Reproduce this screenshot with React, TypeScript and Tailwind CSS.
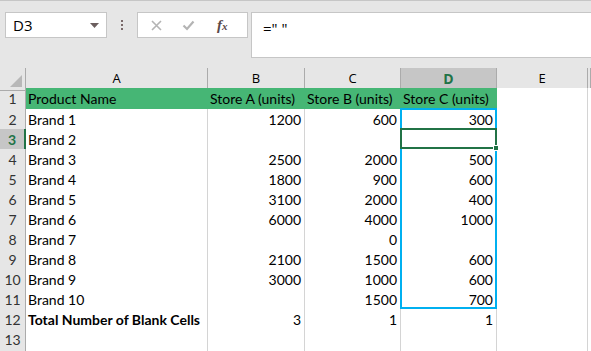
import React from "react";

type Cell = string | number;

const rows: { cells: Cell[]; bold?: boolean }[] = [
  { cells: ["Brand 1", 1200, 600, 300] },
  { cells: ["Brand 2", "", "", ""] },
  { cells: ["Brand 3", 2500, 2000, 500] },
  { cells: ["Brand 4", 1800, 900, 600] },
  { cells: ["Brand 5", 3100, 2000, 400] },
  { cells: ["Brand 6", 6000, 4000, 1000] },
  { cells: ["Brand 7", "", 0, ""] },
  { cells: ["Brand 8", 2100, 1500, 600] },
  { cells: ["Brand 9", 3000, 1000, 600] },
  { cells: ["Brand 10", "", 1500, 700] },
  { cells: ["Total Number of Blank Cells", 3, 1, 1], bold: true },
  { cells: ["", "", "", ""] },
  { cells: ["", "", "", ""] },
];

const gridCols = "grid grid-cols-[26px_182px_97px_96px_96px_91px_1fr]";
const cellFont = { fontFamily: "Lato, 'Open Sans', sans-serif" };

export default function App() {
  return (
    <div className="w-[591px] h-[351px] overflow-hidden bg-[#e6e6e6] relative" style={{ fontFamily: "'Open Sans', 'Liberation Sans', sans-serif" }}>
      {/* Formula bar */}
      <div className="h-[68px] border-t border-[#c6c6c6] relative">
        <div className="flex items-start pt-[11px]">
          <div className="ml-[5px] w-[102px] h-[26px] bg-white border border-[#c6c6c6] flex items-center justify-between pl-[7px] pr-[7px]">
            <span className="text-[15px] text-black leading-none">D3</span>
            <svg width="9" height="5" viewBox="0 0 9 5"><path d="M0 0h9L4.5 5z" fill="#6b5e5e" /></svg>
          </div>
          <div className="w-[30px] h-[26px] flex flex-col items-center justify-center gap-[2px]">
            <span className="w-[2px] h-[2px] bg-[#7a6a6a]" />
            <span className="w-[2px] h-[2px] bg-[#7a6a6a]" />
            <span className="w-[2px] h-[2px] bg-[#7a6a6a]" />
          </div>
          <div className="w-[111px] h-[26px] bg-white border border-[#c6c6c6] flex items-center">
            <svg className="ml-[13px]" width="11" height="11" viewBox="0 0 11 11"><path d="M1 1l9 9M10 1l-9 9" stroke="#b4b4b4" strokeWidth="1.6" /></svg>
            <svg className="ml-[20px]" width="13" height="11" viewBox="0 0 13 11"><path d="M1.5 5.5l3.5 3.5 6.5-7.5" stroke="#b4b4b4" strokeWidth="2.2" fill="none" /></svg>
            <span className="ml-[22px] text-[15px] italic font-bold text-[#5a4a4a] leading-none" style={{ fontFamily: "'Liberation Serif', serif" }}>
              f<span className="text-[11px]">x</span>
            </span>
          </div>
          <div className="ml-[3px] flex-1 h-[46px] bg-white border-l border-y border-[#c6c6c6] pl-[11px] pt-[3px]">
            <span className="text-[15px] text-black">=" "</span>
          </div>
        </div>
      </div>

      {/* Sheet */}
      <div className="relative">
        {/* column header */}
        <div className={`${gridCols} h-[20px]`}>
          <div className="border-r border-b border-[#ababab] bg-[#e6e6e6] relative">
            <svg className="absolute right-[3px] bottom-[3px]" width="12" height="12" viewBox="0 0 12 12"><path d="M12 0V12H0z" fill="#b8b8b8" /></svg>
          </div>
          {["A", "B", "C", "D", "E", ""].map((l, i) => (
            <div
              key={i}
              className={
                l === "D"
                  ? "bg-[#c6c6c6] border-r border-[#ababab] border-b-2 border-b-[#217346] flex items-center justify-center text-[14px] text-[#217346] font-bold"
                  : "bg-[#e6e6e6] border-r border-b border-[#ababab] flex items-center justify-center text-[13px] text-black"
              }
            >
              {l}
            </div>
          ))}
        </div>

        {/* row 1 */}
        <div className={`${gridCols} h-[21px]`} style={cellFont}>
          <div className="bg-[#e6e6e6] border-r border-b border-[#ababab] flex items-center justify-center text-[14px] text-[#333]">1</div>
          {["Product Name", "Store A (units)", "Store B (units)", "Store C (units)"].map((t, i) => (
            <div key={i} className="bg-[#46b675] border-b border-[#46b675] pl-[2px] flex items-end pb-[1px] text-[14px] text-black whitespace-nowrap overflow-hidden leading-[18px]">
              {t}
            </div>
          ))}
          <div className="bg-white border-r border-b border-[#d4d4d4]" />
          <div className="bg-white border-b border-[#d4d4d4]" />
        </div>

        {rows.map((r, ri) => {
          const n = ri + 2;
          return (
            <div key={ri} className={`${gridCols} h-[20px]`} style={cellFont}>
              <div
                className={
                  n === 3
                    ? "bg-[#c6c6c6] border-r-2 border-r-[#217346] border-b border-[#ababab] flex items-center justify-center text-[14px] font-bold text-[#217346]"
                    : "bg-[#e6e6e6] border-r border-b border-[#ababab] flex items-center justify-center text-[14px] text-[#333]"
                }
              >
                {n <= 13 ? n : ""}
              </div>
              {r.cells.map((c, ci) => (
                <div
                  key={ci}
                  className={`bg-white border-r border-[#d4d4d4] ${n === 11 && ci < 4 ? "border-b border-b-black" : "border-b border-[#d4d4d4]"} flex items-end pb-[1px] text-[14px] text-black whitespace-nowrap overflow-hidden leading-[18px] ${
                    typeof c === "number" ? "justify-end pr-[3px]" : "pl-[2px]"
                  } ${r.bold && ci === 0 ? "font-bold" : ""}`}
                >
                  {c}
                </div>
              ))}
              <div className="bg-white border-r border-b border-[#d4d4d4]" />
              <div className="bg-white border-b border-[#d4d4d4]" />
            </div>
          );
        })}

        {/* selection overlays */}
        <div className="absolute left-[400px] top-[40px] w-[97px] h-[201px] border-2 border-[#00b0f0] pointer-events-none" />
        <div className="absolute left-[400px] top-[60px] w-[97px] h-[21px] border-2 border-[#217346] pointer-events-none" />
        <div className="absolute left-[493px] top-[77px] w-[6px] h-[6px] bg-[#217346] border border-white pointer-events-none" />
      </div>
    </div>
  );
}
